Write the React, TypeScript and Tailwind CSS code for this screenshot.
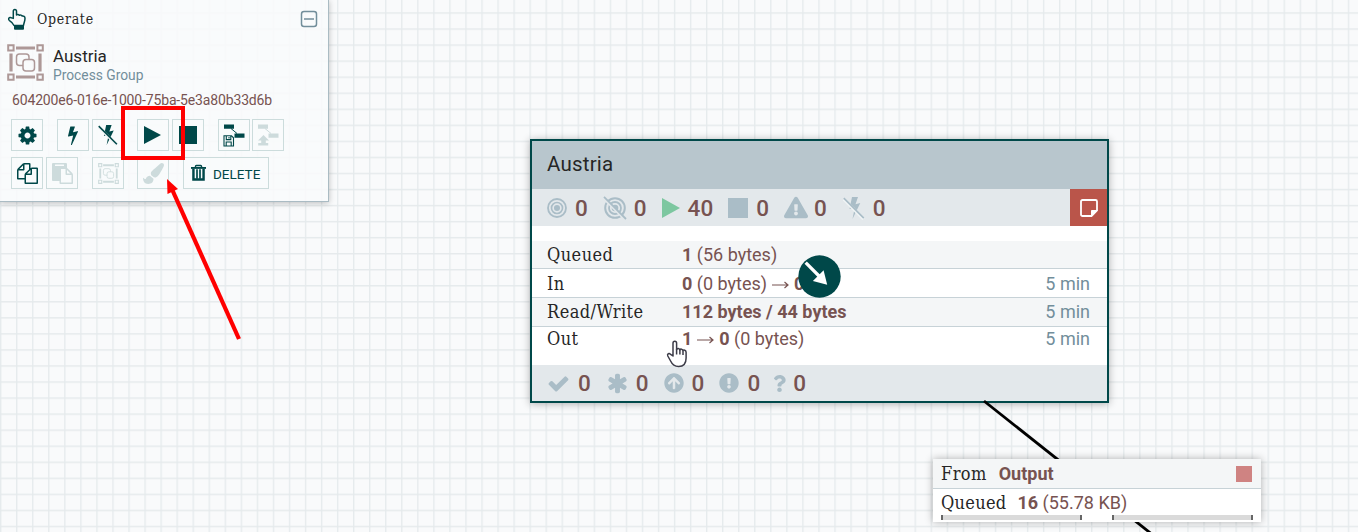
import type { ReactNode } from "react";
import {
  FaArrowCircleUp,
  FaExclamationCircle,
  FaExclamationTriangle,
  FaPaintBrush,
  FaQuestion,
} from "react-icons/fa";

const slab = "font-['DejaVu_Serif_Condensed','DejaVu_Serif',serif] [font-stretch:condensed]";

type IconProps = { className?: string };

function Glyph({ d, className }: IconProps & { d: string }) {
  return (
    <svg viewBox="0 0 1792 1792" className={className} fill="currentColor">
      <path d={d} />
    </svg>
  );
}

const GEAR =
  "M1152 896q0-106-75-181t-181-75-181 75-75 181 75 181 181 75 181-75 75-181zm512-109v222q0 12-8 23t-20 13l-185 28q-19 54-39 91 35 50 107 138 10 12 10 25t-9 23q-27 37-99 108t-94 71q-12 0-26-9l-138-108q-44 23-91 38-16 136-29 186-7 28-36 28h-222q-14 0-24.5-8.5t-11.5-21.5l-28-184q-49-16-90-37l-141 107q-10 9-25 9-14 0-25-11-126-114-165-168-7-10-7-23 0-12 8-23 15-21 51-66.5t54-70.5q-27-50-41-99l-183-27q-13-2-21-12.5t-8-23.5v-222q0-12 8-23t19-13l186-28q14-46 39-92-40-57-107-138-10-12-10-24 0-10 9-23 26-36 98.5-107.5t94.5-71.5q13 0 26 10l138 107q44-23 91-38 16-136 29-186 7-28 36-28h222q14 0 24.5 8.5t11.5 21.5l28 184q49 16 90 37l142-107q9-9 24-9 13 0 25 10 129 119 165 170 7 8 7 22 0 12-8 23-15 21-51 66.5t-54 70.5q26 50 41 98l183 28q13 2 21 12.5t8 23.5z";
const BOLT =
  "M1333 566q18 20 7 44l-540 1157q-13 25-42 25-4 0-14-2-17-5-25.500-19t-4.500-30l197-808-406 101q-4 1-12 1-18 0-31-11-18-15-13-39l201-825q4-16 16-26t28-10h328q19 0 32 12.500t13 29.500q0 8-5 18l-171 463 396-98q8-2 12-2 19 0 34 15z";
const COPY =
  "M1696 384q40 0 68 28t28 68v1216q0 40-28 68t-68 28h-960q-40 0-68-28t-28-68v-288h-544q-40 0-68-28t-28-68v-672q0-40 20-88t48-76l408-408q28-28 76-48t88-20h416q40 0 68 28t28 68v328q68-40 128-40h416zm-544 213l-299 299h299v-299zm-640-384l-299 299h299v-299zm196 647l316-316v-416h-384v416q0 40-28 68t-68 28h-416v640h512v-256q0-40 20-88t48-76zm956 804v-1152h-384v416q0 40-28 68t-68 28h-416v640h896z";
const PASTE =
  "M768 1664h896v-640h-416q-40 0-68-28t-28-68v-416h-384v1152zm256-1440v-64q0-13-9.500-22.500t-22.500-9.500h-704q-13 0-22.500 9.500t-9.500 22.500v64q0 13 9.500 22.500t22.500 9.500h704q13 0 22.500-9.500t9.500-22.500zm256 672h299l-299-299v299zm512 128v672q0 40-28 68t-68 28h-960q-40 0-68-28t-28-68v-160h-544q-40 0-68-28t-28-68v-1344q0-40 28-68t68-28h1088q40 0 68 28t28 68v328q21 13 36 28l408 408q28 28 48 76t20 88z";
const CHECK =
  "M1671 566q0 40-28 68l-724 724-136 136q-28 28-68 28t-68-28l-136-136-362-362q-28-28-28-68t28-68l136-136q28-28 68-28t68 28l294 295 656-657q28-28 68-28t68 28l136 136q28 28 28 68z";
const ASTERISK =
  "M1546 1050q46 26 59.500 77.500t-12.500 97.500l-64 110q-26 46-77.500 59.500t-97.500-12.500l-266-153v307q0 52-38 90t-90 38h-128q-52 0-90-38t-38-90v-307l-266 153q-46 26-97.500 12.500t-77.500-59.500l-64-110q-26-46-12.500-97.500t59.500-77.500l266-154-266-154q-46-26-59.500-77.500t12.500-97.500l64-110q26-46 77.500-59.500t97.500 12.500l266 153v-307q0-52 38-90t90-38h128q52 0 90 38t38 90v307l266-153q46-26 97.500-12.500t77.500 59.500l64 110q26 46 12.500 97.500t-59.500 77.500l-266 154z";

function BoltSlash({ className }: IconProps) {
  return (
    <svg viewBox="0 0 22 24" className={className} fill="currentColor">
      <path d="M9 1h6l-2.500 7.200 4.800-1.200L9.500 23l2.200-11.300-5.200 1.300z" />
      <path d="M0.800 3.200L20.500 23" stroke="#f1f5f6" strokeWidth="3" />
      <path d="M0.800 2.200L20.800 22.200" stroke="currentColor" strokeWidth="1.700" />
    </svg>
  );
}

function GroupIcon({ className }: IconProps) {
  return (
    <svg viewBox="0 0 37 37" className={className} fill="none" stroke="currentColor">
      <path d="M9 4h19M9 33h19M4 9.500v18M33 9.500v18" strokeWidth="3.200" />
      <path
        d="M1.200 1.200h5.400v5.400H1.200zM30.400 1.200h5.400v5.400h-5.400zM1.200 30.400h5.400v5.400H1.200zM30.400 30.400h5.400v5.400h-5.400z"
        strokeWidth="2"
      />
      <path d="M16 21.500h-3.500a3 3 0 0 1-3-3V13a3 3 0 0 1 3-3h6.500a3 3 0 0 1 3 3v2.500" strokeWidth="1.500" />
      <rect x="16" y="15.500" width="11.500" height="11.500" rx="3" strokeWidth="1.500" />
    </svg>
  );
}

function HandIcon({ className }: IconProps) {
  return (
    <svg viewBox="0 0 19 22" className={className} fill="none" stroke="currentColor" strokeWidth="1.500" strokeLinejoin="round">
      <path d="M7 17.500C6 15.500 4.500 13.800 2.500 12.600c-1.600-1.200-.8-3.400.8-3l3 .8V3.300c0-2.500 3.200-2.500 3.200 0V7c.8-.9 2.400-.7 2.900.3 1-.6 2.400-.1 2.700.8 1.500-.4 2.900.5 2.900 2.200 0 3-1 4-1.500 7.200z" />
      <path d="M7.500 17.600h9v3.600h-9z" fill="currentColor" strokeWidth="1" />
    </svg>
  );
}

function TrashIcon({ className }: IconProps) {
  return (
    <svg viewBox="0 0 16 18" className={className} fill="none" stroke="currentColor">
      <path d="M0 3.600h16" strokeWidth="2" />
      <path d="M4.800 3.500V1.900q0-.9.900-.9h4.600q.9 0 .9.900v1.600" strokeWidth="1.500" />
      <path d="M2.600 4.500v11.400h10.800V4.500" strokeWidth="2.600" />
      <path d="M6.400 5v10M9.600 5v10" strokeWidth="1.800" />
    </svg>
  );
}

function TemplateIcon({ className, upload }: IconProps & { upload?: boolean }) {
  return (
    <svg viewBox="0 0 22 23" className={className} fill="currentColor">
      <path d="M1 0.500h10v4.200H1zM11.500 9.500h10v4.200h-10z" />
      <path d="M8 4.500l6 5" stroke="currentColor" strokeWidth="1" />
      {upload ? (
        <path d="M6.500 11l5.500 5.500H8.800v2.500h2.400v2.500H1.200V19h3v-2.500H1z" />
      ) : (
        <path
          d="M1 11.800h7.500l2 2V22H1zM3.300 12v3.600h4.500V12M3.200 22v-4h5v4M6 13v1.500"
          fill="none"
          stroke="currentColor"
          strokeWidth="1.100"
        />
      )}
    </svg>
  );
}

function Target({ className, slashed }: IconProps & { slashed?: boolean }) {
  return (
    <svg viewBox="0 0 24 24" className={className} fill="none" stroke="currentColor">
      <circle cx="12" cy="12" r="3.300" fill="currentColor" stroke="none" />
      <circle cx="12" cy="12" r="6" strokeWidth="1.800" />
      <circle cx="12" cy="12" r="9.800" strokeWidth="2" />
      {slashed && (
        <>
          <path d="M1 2.500L21.500 23" stroke="#e3e8eb" strokeWidth="2.500" />
          <path d="M1 0.800L23 23" strokeWidth="1.800" />
        </>
      )}
    </svg>
  );
}

function ToolButton({ children, className = "", disabled }: { children: ReactNode; className?: string; disabled?: boolean }) {
  return (
    <button
      className={`flex h-8 w-8 shrink-0 items-center justify-center border border-[#ccdcdc] bg-[#f9fbfc]/60 ${
        disabled ? "text-[#cddbdc]" : "text-[#004849]"
      } ${className}`}
    >
      {children}
    </button>
  );
}

function OperatePanel() {
  return (
    <section className="absolute left-0 top-0 h-[202px] w-[329px] border-b border-r border-[#aabbc3] bg-[#f9fafb]/85 shadow-[0_1px_6px_rgba(0,0,0,0.25)]">
      <header className="flex h-[38px] items-center pl-[7px]">
        <HandIcon className="h-[22px] w-[19px] text-[#004849]" />
        <h2 className={`ml-[11px] text-[14px] leading-5 tracking-[0.700px] text-[#262626] ${slab}`}>Operate</h2>
        <svg viewBox="0 0 18 18" className="ml-auto mr-[10px] h-[18px] w-[18px]" fill="none" stroke="#728e9b" strokeWidth="1.500">
          <rect x="1.500" y="1.500" width="15" height="15" rx="2.500" />
          <path d="M4 9h10" />
        </svg>
      </header>
      <div className="flex h-[46px] items-start pl-[7px] pt-[6px]">
        <GroupIcon className="h-[37px] w-[37px] text-[#ad9897]" />
        <div className="ml-[9px] pt-[2px]">
          <div className="text-[17px] leading-5 text-[#262626]">Austria</div>
          <div className="text-[13.800px] leading-[18px] text-[#728e9b]">Process Group</div>
        </div>
      </div>
      <div className="mt-2 pl-[12px] text-[14px] leading-4 tracking-[-0.150px] text-[#775351]">604200e6-016e-1000-75ba-5e3a80b33d6b</div>
      <div className="mt-[11px] flex pl-[11px]">
        <ToolButton><Glyph d={GEAR} className="h-[21px] w-[21px]" /></ToolButton>
        <ToolButton className="ml-[14px]"><Glyph d={BOLT} className="mr-px h-[20px] w-[22px]" /></ToolButton>
        <ToolButton className="ml-[3px]"><BoltSlash className="h-[22px] w-[20px]" /></ToolButton>
        <ToolButton className="ml-[13px]">
          <svg viewBox="0 0 17 18" className="mr-[2px] h-[18px] w-[17px]" fill="currentColor"><path d="M0 0l17 9-17 9z" /></svg>
        </ToolButton>
        <ToolButton className="ml-[3px]"><span className="mr-px h-[18px] w-[18px] bg-[#004849]" /></ToolButton>
        <ToolButton className="ml-[14px]"><TemplateIcon className="h-[23px] w-[22px]" /></ToolButton>
        <ToolButton className="ml-[2px]" disabled><TemplateIcon upload className="h-[23px] w-[22px]" /></ToolButton>
      </div>
      <div className="mt-[6px] flex pl-[11px]">
        <ToolButton><Glyph d={COPY} className="h-[21px] w-[21px]" /></ToolButton>
        <ToolButton className="ml-[3px]" disabled><Glyph d={PASTE} className="h-[21px] w-[21px]" /></ToolButton>
        <ToolButton className="ml-[14px]" disabled><GroupIcon className="h-[21px] w-[21px]" /></ToolButton>
        <ToolButton className="ml-[13px]" disabled><FaPaintBrush className="h-[21px] w-[21px]" /></ToolButton>
        <button className="ml-[14px] flex h-8 w-[86px] items-center border border-[#ccdcdc] bg-[#f9fbfc]/60 pl-[7px] text-[#004849]">
          <TrashIcon className="h-[18px] w-[15px]" />
          <span className="ml-[7px] pt-[2px] text-[13.500px] leading-4">DELETE</span>
        </button>
      </div>
    </section>
  );
}

function Stat({ icon, value, className = "", gap }: { icon: ReactNode; value: string; className?: string; gap: string }) {
  return (
    <div className={`flex items-center text-[#aabdc7] ${className}`}>
      {icon}
      <span className={`text-[22.500px] font-medium leading-7 text-[#775351] ${gap}`}>{value}</span>
    </div>
  );
}

function ArrowRight() {
  return (
    <svg viewBox="0 0 17 8" className="mx-[5px] inline-block h-[8px] w-[17px]" fill="none" stroke="#775351" strokeWidth="1.200">
      <path d="M0 4h16M12.500 1L16 4l-3.500 3" />
    </svg>
  );
}

function Row({ label, children, time, className = "" }: { label: string; children: ReactNode; time?: string; className?: string }) {
  return (
    <div className={`flex items-start pl-[15px] pr-[17px] text-[18px] leading-6 ${className}`}>
      <span className={`w-[135px] shrink-0 text-[18px] tracking-[0.450px] text-[#262626] ${slab}`}>{label}</span>
      <span className="whitespace-pre text-[#775351]">{children}</span>
      {time && <span className="ml-auto text-[#728e9b]">{time}</span>}
    </div>
  );
}

function ProcessGroup() {
  return (
    <section className="absolute left-[530px] top-[139px] flex h-[264px] w-[579px] flex-col border-2 border-[#004849] bg-white shadow-[0_1px_8px_rgba(0,0,0,0.3)]">
      <h1 className="flex h-[48px] shrink-0 items-center bg-[#b8c6cd] pl-[15px] text-[20.500px] tracking-[0.200px] text-[#262626] pb-[2px]">Austria</h1>
      <div className="flex h-[37px] shrink-0 items-center bg-[#e3e8eb] pl-[14px]">
        <Stat icon={<Target className="h-[22px] w-[22px]" />} value="0" gap="ml-[7px]" />
        <Stat className="ml-[15px]" icon={<Target slashed className="h-[24px] w-[24px]" />} value="0" gap="ml-[7px]" />
        <Stat
          className="ml-[15px]"
          icon={<svg viewBox="0 0 18 20" className="h-[20px] w-[18px]"><path d="M0 0l18 10-18 10z" fill="#7dc7a0" /></svg>}
          value="40"
          gap="ml-[8px]"
        />
        <Stat className="ml-[15px]" icon={<span className="h-[20px] w-[20px] bg-[#aabdc7]" />} value="0" gap="ml-[8px]" />
        <Stat className="ml-[15px]" icon={<FaExclamationTriangle className="h-[23px] w-[24px]" />} value="0" gap="ml-[6px]" />
        <Stat className="ml-[16px]" icon={<BoltSlash className="h-[24px] w-[22px]" />} value="0" gap="ml-[8px]" />
        <div className="ml-auto flex h-[37px] w-[37px] items-center justify-center bg-[#ba554a]">
          <svg viewBox="0 0 18 18" className="h-[18px] w-[18px]" fill="none" stroke="#fff" strokeWidth="1.800">
            <path d="M11.500 17H2.500A1.500 1.500 0 0 1 1 15.500v-13A1.500 1.500 0 0 1 2.500 1h13A1.500 1.500 0 0 1 17 2.500v9z" />
            <path d="M11.500 17v-5.500H17z" fill="#fff" strokeWidth="1" />
          </svg>
        </div>
      </div>
      <div className="mt-[15px] shrink-0">
        <Row label="Queued" className="h-[27px] bg-[#f4f6f7] pt-[2px]"><b>1</b> (56 bytes)</Row>
        <Row label="In" time="5 min" className="h-[29px] border-t border-[#c7d2d7] pt-[3px]"><b>0</b> (0 bytes)<ArrowRight /><b>0</b></Row>
        <Row label="Read/Write" time="5 min" className="h-[29px] border-t border-[#c7d2d7] bg-[#f4f6f7] pt-[2px]"><b>112 bytes / 44 bytes</b></Row>
        <Row label="Out" time="5 min" className="h-[39px] border-t border-[#c7d2d7]"><b>1</b><ArrowRight /><b>0</b> (0 bytes)</Row>
      </div>
      <div className="flex flex-1 items-center bg-[#e3e8eb] pl-[15px]">
        <Stat icon={<Glyph d={CHECK} className="h-[23px] w-[23px]" />} value="0" gap="ml-[8px]" />
        <Stat className="ml-[15px]" icon={<Glyph d={ASTERISK} className="h-[23px] w-[23px]" />} value="0" gap="ml-[7px]" />
        <Stat className="ml-[15px]" icon={<FaArrowCircleUp className="h-[20px] w-[20px]" />} value="0" gap="ml-[8px]" />
        <Stat className="ml-[15px]" icon={<FaExclamationCircle className="h-[20px] w-[20px]" />} value="0" gap="ml-[8px]" />
        <Stat className="ml-[13px]" icon={<FaQuestion className="h-[17px] w-[13px]" />} value="0" gap="ml-[7px]" />
      </div>
    </section>
  );
}

function QueueMeter() {
  return <div className="h-[5px] w-[141px] border-x-2 border-[#666] bg-[#dadada]" />;
}

function ConnectionLabel() {
  return (
    <section className="absolute left-[933px] top-[459px] h-[63px] w-[328px] bg-white text-[18px] shadow-[0_0_8px_rgba(0,0,0,0.3)]">
      <div className="flex h-[30px] items-center border-b border-[#c7d2d7] bg-[#f4f6f7] pl-[8px] pr-[9px]">
        <span className={`tracking-[0.400px] text-[#262626] ${slab}`}>From</span>
        <b className="ml-[12px] text-[#775351]">Output</b>
        <span className="ml-auto h-4 w-4 bg-[#cf8382]" />
      </div>
      <div className="flex h-[26px] items-center pl-[8px]">
        <span className={`tracking-[0.300px] text-[#262626] ${slab}`}>Queued</span>
        <span className="ml-[11px] text-[#775351]"><b>16</b> (55.78 KB)</span>
      </div>
      <div className="flex gap-[30px] pl-[8px]">
        <QueueMeter />
        <QueueMeter />
      </div>
    </section>
  );
}

export default function App() {
  return (
    <main className="relative h-[532px] w-[1358px] overflow-hidden bg-[#f9fafb] font-['Roboto',sans-serif]">
      <svg className="absolute inset-0 h-full w-full">
        <defs>
          <pattern id="grid" x="0" y="12.300" width="16.045" height="16.045" patternUnits="userSpaceOnUse">
            <path d="M0.700 0v16.045M0 0.700h16.045" stroke="#e5eaec" strokeWidth="1.300" />
          </pattern>
        </defs>
        <rect width="1358" height="532" fill="url(#grid)" />
      </svg>
      <ProcessGroup />
      <svg className="absolute inset-0 h-full w-full">
        <path d="M984 401L1151 533.500" stroke="#000" strokeWidth="2.800" />
      </svg>
      <ConnectionLabel />
      <OperatePanel />
      <svg viewBox="0 0 42 42" className="absolute left-[798px] top-[255px] h-[43px] w-[43px]">
        <circle cx="21" cy="21" r="20.700" fill="#004849" />
        <path d="M7.500 7.500L22 22" stroke="#fff" strokeWidth="3.200" />
        <path d="M28.500 29L14.500 25.500 25 15z" fill="#fff" />
      </svg>
      <svg viewBox="0 0 22 28" className="absolute left-[666px] top-[340px] h-[28px] w-[22px]" fill="#fff" stroke="#3c3c48" strokeWidth="1.500" strokeLinejoin="round">
        <path d="M7 16V3.200c0-2.500 3.600-2.500 3.600 0V9.500c.4-1.600 3.100-1.300 3.200.4.600-1.300 3-.9 3.100.7.700-1 3.200-.6 3.200 1.600V18c0 5-2 8.500-7.500 8.500-5 0-6.600-2.500-8-5.500L1.800 16c-.9-2.200 1.300-3.200 2.800-1.600z" />
        <path d="M10.600 9v5.500M13.900 10v4.500M17 11v4" fill="none" />
      </svg>
      <div className="absolute left-[121px] top-[106px] h-[54px] w-[64px] border-4 border-[#ff0000]" />
      <svg className="absolute inset-0 h-full w-full">
        <path d="M239 339L171 187" stroke="#ff0000" strokeWidth="4.200" />
        <path d="M167 179L178 189 167.500 194z" fill="#ff0000" />
      </svg>
    </main>
  );
}
